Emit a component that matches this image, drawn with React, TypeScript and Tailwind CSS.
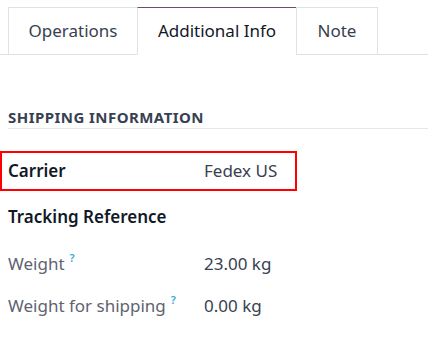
const font = { fontFamily: '"Noto Sans", "Open Sans", sans-serif' };

const Tab = ({ label, active, width }: { label: string; active?: boolean; width: string }) => (
  <div
    className={`${width} h-[48px] -mb-px flex items-center justify-center text-[17px] border-x border-[#dee2e6] bg-white ${
      active
        ? 'border-t border-t-[#714b67] border-b border-b-white text-[#111827]'
        : 'border-t border-t-[#dee2e6] border-b border-b-[#dee2e6] text-[#374151]'
    }`}
  >
    {label}
  </div>
);

const Help = () => <sup className="ml-[5px] text-[11px] font-semibold text-[#3aa9d8] -top-[8px]">?</sup>;

export default function App() {
  return (
    <div className="w-[428px] h-[347px] bg-white overflow-hidden" style={font}>
      <div className="pt-[7px] pl-2 flex border-b border-[#dee2e6]">
        <Tab label="Operations" width="w-[130px]" />
        <Tab label="Additional Info" width="w-[160px] -ml-px" active />
        <Tab label="Note" width="w-[82px] -ml-px" />
      </div>

      <div className="mt-[52px] ml-2 border-b border-[#e5e7eb] pb-[1px]">
        <h3 className="text-[15px] leading-5 font-bold text-[#374151] uppercase tracking-[0.03em]">Shipping Information</h3>
      </div>

      <div className="mt-[22px] w-[297px] h-[40px] border-2 border-[#ff0000] flex items-center">
        <span className="w-[202px] pl-[6px] text-[17px] font-semibold text-[#111827]">Carrier</span>
        <span className="text-[17px] text-[#374151]">Fedex US</span>
      </div>

      <div className="mt-[12px] pl-2 h-[28px] flex items-center">
        <span className="text-[17px] font-semibold text-[#111827]">Tracking Reference</span>
      </div>

      <div className="mt-[19px] pl-2 h-[28px] flex items-center">
        <span className="w-[196px] text-[17px] text-[#5f636f]">
          Weight
          <Help />
        </span>
        <span className="text-[17px] text-[#374151]">23.00 kg</span>
      </div>

      <div className="mt-[14px] pl-2 h-[28px] flex items-center">
        <span className="w-[196px] text-[17px] text-[#5f636f]">
          Weight for shipping
          <Help />
        </span>
        <span className="text-[17px] text-[#374151]">0.00 kg</span>
      </div>
    </div>
  );
}
